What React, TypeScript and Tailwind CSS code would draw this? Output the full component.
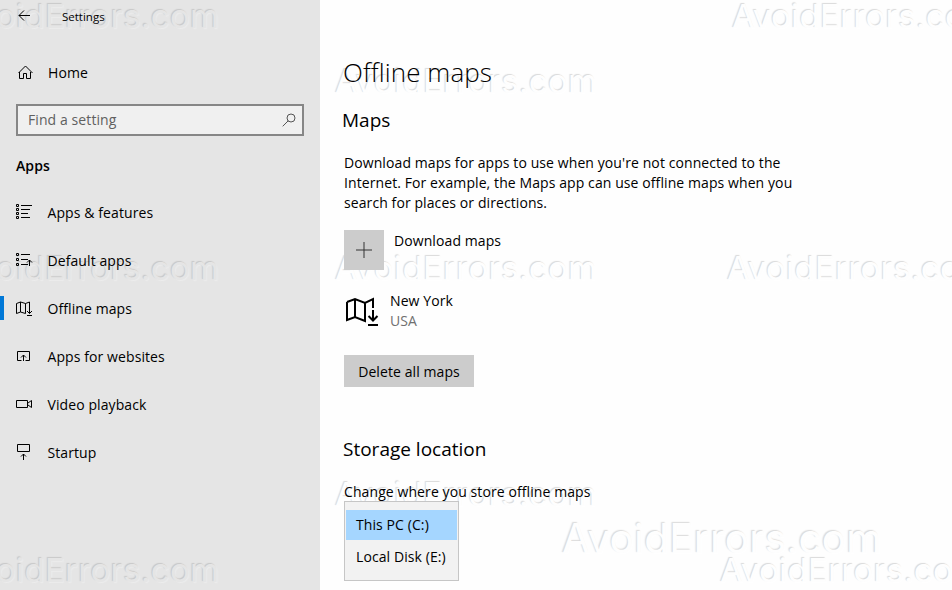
import type { ReactNode } from "react";

const Watermark = ({ className }: { className: string }) => {
  return (
    <span
      aria-hidden="true"
      className={
        "absolute origin-top-left whitespace-nowrap font-['Inter',sans-serif] text-[33px] leading-[40px] font-normal tracking-[0.3px] select-none " +
        className
      }
    >
      AvoidErrors.com
    </span>
  );
};

const NavIcon = ({ children }: { children: ReactNode }) => (
  <svg
    width="18"
    height="18"
    viewBox="0 0 18 18"
    fill="none"
    stroke="black"
    strokeWidth="1"
    className="mt-[2px] shrink-0"
  >
    {children}
  </svg>
);

const navItems = [
  {
    label: "Apps & features",
    icon: (
      <path d="M.5.5h2v2h-2zM.5 4.5h2v2h-2zM.5 8.5h2v2h-2zM.5 12.5h2v2h-2zM5 1.5h11M5 5.5h9M5 9.5h7M5 13.5h9" />
    ),
  },
  {
    label: "Default apps",
    icon: (
      <path d="M.5 1.5h2v2h-2zM.5 6.5h2v2h-2zM.5 11.5h2v2h-2zM5 2.5h9M5 7.5h7M5 12.5h7M13.5 14V8M11 10.5l2.5-2.5 2.5 2.5" />
    ),
  },
  {
    label: "Offline maps",
    active: true,
    icon: (
      <path d="M.5 3.5L4.5 2l5 1.5 4-1.5v4M.5 3.5v10l4-1.5 5 1.5V3.5M4.5 2v10M13.5 6v7.5M11 11l2.5 2.5L16 11M11 15.5h5" />
    ),
  },
  {
    label: "Apps for websites",
    icon: <path d="M5.5 12.5h-4v-9h12v9h-4M7.5 13V7M5 9.5L7.5 7 10 9.5" />,
  },
  {
    label: "Video playback",
    icon: <path d="M.5 4.5h11v7H.5zM12 7l3.5-2.5v7L12 9" />,
  },
  {
    label: "Startup",
    icon: <path d="M1.5.5h12v7h-12zM7.5 16v-6M5 12.5L7.5 10l2.5 2.5" />,
  },
];

const Sidebar = () => {
  return (
    <aside className="relative isolate h-full w-80 shrink-0 overflow-hidden bg-[#e5e5e5]">
      <div className="absolute inset-0 -z-10 text-[#e5e5e5] [text-shadow:-1px_-1px_1px_#c8c8c8,1px_1px_1px_#ececec]">
        <Watermark className="-left-[43px] -top-[4px]" />
        <Watermark className="-left-[43px] top-[248px]" />
        <Watermark className="-left-[43px] top-[550px]" />
      </div>

      <header className="flex h-[33px] items-center pl-[18px]">
        <svg width="13" height="12" viewBox="0 0 13 12" fill="none" stroke="black" className="mb-[2px]">
          <path d="M12 5.5H1M6 .5L1 5.5l5 5" />
        </svg>
        <span className="pl-[31px] text-[11.5px] tracking-normal">Settings</span>
      </header>

      <a className="mt-[15px] flex h-12 items-center pl-[18px]">
        <svg width="15" height="15" viewBox="0 0 15 15" fill="none" stroke="black">
          <path d="M.5 8L7.5 1l7 7M1.5 7v6.5h4v-5h3v5h4V7" />
        </svg>
        <span className="pl-[15px]">Home</span>
      </a>

      <div className="mx-4 mt-2 flex h-8 items-center justify-between border-2 border-[#868686] bg-[#f0f0f0] pr-[6px] pl-[10px]">
        <span className="pb-[2px] text-[#606060]">Find a setting</span>
        <svg width="14" height="14" viewBox="0 0 14 14" fill="none" stroke="#555">
          <circle cx="9" cy="5" r="4" />
          <path d="M6.2 7.8L.7 13.3" />
        </svg>
      </div>

      <h2 className="mt-[19px] mb-[11px] pl-4 leading-[22px] font-semibold">Apps</h2>

      <nav>
        {navItems.map((item) => (
          <a key={item.label} className="flex h-12 items-center">
            <span className={item.active ? "h-6 w-1 bg-[#0078d7]" : "h-6 w-1"} />
            <span className="flex items-center gap-[13.5px] pl-3">
              <NavIcon>{item.icon}</NavIcon>
              {item.label}
            </span>
          </a>
        ))}
      </nav>
    </aside>
  );
};

const Content = () => {
  return (
    <main className="relative isolate h-full flex-1 overflow-hidden bg-[#fefefe] pl-6">
      <div className="absolute inset-0 -z-10 text-[#fefefe] [text-shadow:-1px_-1px_1px_#dadada,1px_1px_1px_#ffffff]">
        <Watermark className="left-[412px] -top-[4px]" />
        <Watermark className="left-[15px] top-[61px]" />
        <Watermark className="left-[15px] top-[248px]" />
        <Watermark className="left-[407px] top-[248px]" />
        <Watermark className="left-[15px] top-[474px]" />
        <Watermark className="left-[242px] top-[514px] scale-[1.22]" />
        <Watermark className="left-[400px] top-[550px]" />
      </div>

      <h1 className="-ml-px pt-[52px] text-[26px] leading-10 font-light">Offline maps</h1>

      <section>
        <h2 className="mt-[14px] -ml-[2px] text-[19px] leading-7 tracking-normal">Maps</h2>
        <p className="mt-[19px] leading-5">
          Download maps for apps to use when you're not connected to the
          <br />
          Internet. For example, the Maps app can use offline maps when you
          <br />
          search for places or directions.
        </p>

        <div className="mt-[17px] flex">
          <button className="flex size-10 items-center justify-center bg-[#cccccc]">
            <svg width="16" height="16" viewBox="0 0 16 16" stroke="#333">
              <path d="M0 8h16M8 0v16" />
            </svg>
          </button>
          <span className="pl-[10px] leading-[22px]">Download maps</span>
        </div>

        <div className="mt-[21px] flex h-10">
          <svg width="36" height="36" viewBox="0 0 36 36" fill="none" stroke="black" strokeWidth="2" className="mt-[2px]">
            <path d="M3 9l8-3 10 4 8-4v9M3 9v18l8-3 10 4V10M11 6v18M29 17v10M24.5 23l4.5 4.5 4.5-4.5M24 32h10" />
          </svg>
          <div className="pl-[10px] leading-5">
            <p>New York</p>
            <p className="text-[#707070]">USA</p>
          </div>
        </div>

        <button className="mt-6 h-8 w-[130px] bg-[#cccccc]">Delete all maps</button>
      </section>

      <section>
        <h2 className="mt-[48px] -ml-px text-[19px] leading-7 tracking-normal">Storage location</h2>
        <p className="mt-[19px] leading-5">Change where you store offline maps</p>
        <ul className="-mt-px h-[80px] w-[115px] border border-[#c6c6c6] bg-[#f2f2f2] px-px pt-2">
          <li className="flex h-[30px] items-center bg-[#a5d6ff] pb-[2px] pl-[10px]">This PC (C:)</li>
          <li className="flex h-8 items-center pl-[10px]">Local Disk (E:)</li>
        </ul>
      </section>
    </main>
  );
};

const App = () => {
  return (
    <div className="flex h-[590px] w-[952px] overflow-hidden bg-[#fefefe] font-['Open_Sans','Noto_Sans',sans-serif] text-[14px] tracking-[0.09px] text-black">
      <Sidebar />
      <Content />
    </div>
  );
};

export default App;
